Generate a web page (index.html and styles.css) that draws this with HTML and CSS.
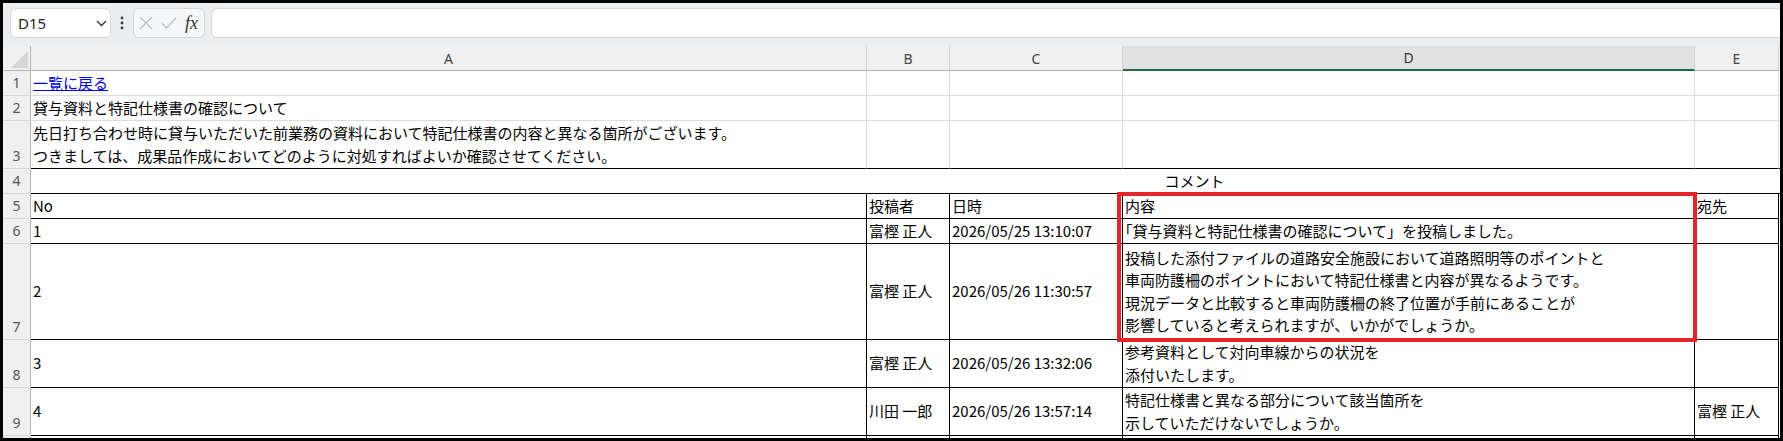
FILE: index.html
```html
<!DOCTYPE html>
<html lang="ja">
<head>
  <meta charset="UTF-8" />
  <title>コメント一覧</title>
  <link rel="stylesheet" href="styles.css">
</head>
<body>
  <div class="window">

    <div class="formula-bar">
      <div class="name-box">
        <span>D15</span>
        <svg width="11" height="7" viewBox="0 0 11 7"><path d="M1 1l4.5 4.5L10 1" fill="none" stroke="#333" stroke-width="1.3"/></svg>
      </div>
      <div class="bar-menu">
        <svg width="4" height="14" viewBox="0 0 4 14" fill="#3a3a3a"><circle cx="2" cy="2" r="1.4"/><circle cx="2" cy="7" r="1.4"/><circle cx="2" cy="12" r="1.4"/></svg>
      </div>
      <div class="edit-box">
        <svg width="14" height="14" viewBox="0 0 14 14"><path d="M1 1L13 13M13 1L1 13" stroke="#b9b9b9" stroke-width="1.2"/></svg>
        <svg width="16" height="12" viewBox="0 0 16 12"><path d="M1 6.5L5.5 11L15 1" fill="none" stroke="#b9b9b9" stroke-width="1.2"/></svg>
        <span class="fx">fx</span>
      </div>
      <div class="formula-input"></div>
    </div>

    <div class="sheet">
      <!-- column headers -->
      <div class="corner"><svg width="17" height="17" viewBox="0 0 17 17"><path d="M17 0V17H0Z" fill="#d6d6d6"/></svg></div>
      <div class="ch">A</div>
      <div class="ch">B</div>
      <div class="ch">C</div>
      <div class="ch sel">D</div>
      <div class="ch">E</div>
      <div class="ch"></div>

      <!-- 1 -->
      <div class="rh">1</div>
      <div class="c"><a class="link" href="#">一覧に戻る</a></div>
      <div class="c"></div>
      <div class="c"></div>
      <div class="c"></div>
      <div class="c"></div>
      <div class="c"></div>

      <!-- 2 -->
      <div class="rh">2</div>
      <div class="c">貸与資料と特記仕様書の確認について</div>
      <div class="c"></div>
      <div class="c"></div>
      <div class="c"></div>
      <div class="c"></div>
      <div class="c"></div>

      <!-- 3 -->
      <div class="rh">3</div>
      <div class="c under"><div>先日打ち合わせ時に貸与いただいた前業務の資料において特記仕様書の内容と異なる箇所がございます。<br>つきましては、成果品作成においてどのように対処すればよいか確認させてください。</div></div>
      <div class="c under"></div>
      <div class="c under"></div>
      <div class="c under"></div>
      <div class="c under"></div>
      <div class="c under"></div>

      <!-- 4: merged title row -->
      <div class="rh">4</div>
      <div class="c merged">コメント</div>

      <!-- 5 -->
      <div class="rh">5</div>
      <div class="c ruled">No</div>
      <div class="c ruled">投稿者</div>
      <div class="c ruled">日時</div>
      <div class="c ruled">内容</div>
      <div class="c ruled">宛先</div>
      <div class="c"></div>

      <!-- 6 -->
      <div class="rh">6</div>
      <div class="c ruled">1</div>
      <div class="c ruled">富樫 正人</div>
      <div class="c ruled">2026/05/25 13:10:07</div>
      <div class="c ruled body">「貸与資料と特記仕様書の確認について」を投稿しました。</div>
      <div class="c ruled"></div>
      <div class="c"></div>

      <!-- 7 -->
      <div class="rh">7</div>
      <div class="c ruled">2</div>
      <div class="c ruled">富樫 正人</div>
      <div class="c ruled">2026/05/26 11:30:57</div>
      <div class="c ruled body"><div>投稿した添付ファイルの道路安全施設において道路照明等のポイントと<br>車両防護柵のポイントにおいて特記仕様書と内容が異なるようです。<br>現況データと比較すると車両防護柵の終了位置が手前にあることが<br>影響していると考えられますが、いかがでしょうか。</div></div>
      <div class="c ruled"></div>
      <div class="c"></div>

      <!-- 8 -->
      <div class="rh">8</div>
      <div class="c ruled">3</div>
      <div class="c ruled">富樫 正人</div>
      <div class="c ruled">2026/05/26 13:32:06</div>
      <div class="c ruled body"><div>参考資料として対向車線からの状況を<br>添付いたします。</div></div>
      <div class="c ruled"></div>
      <div class="c"></div>

      <!-- 9 -->
      <div class="rh">9</div>
      <div class="c ruled">4</div>
      <div class="c ruled">川田 一郎</div>
      <div class="c ruled">2026/05/26 13:57:14</div>
      <div class="c ruled body"><div>特記仕様書と異なる部分について該当箇所を<br>示していただけないでしょうか。</div></div>
      <div class="c ruled">富樫 正人</div>
      <div class="c"></div>

      <!-- 10 (only its top edge shows) -->
      <div class="rh"></div>
      <div class="c ruled"></div>
      <div class="c ruled"></div>
      <div class="c ruled"></div>
      <div class="c ruled"></div>
      <div class="c ruled"></div>
      <div class="c"></div>
    </div>

    <!-- review marker round the 内容 column -->
    <div class="highlight"></div>
  </div>
</body>
</html>
```

FILE: styles.css
```css
body {
  margin: 0;
  background: #000;
  font-family: "Noto Sans CJK JP", sans-serif;
}
.window {
  position: relative;
  margin: 3px;
  width: 1777px;
  height: 435px;
  background: #fff;
  overflow: hidden;
}

/* formula bar */
.formula-bar {
  display: flex;
  align-items: flex-start;
  height: 43px;
  box-sizing: border-box;
  padding: 5px 0 0 7px;
  background: #ebeef1;
}
.name-box {
  display: flex;
  align-items: center;
  justify-content: space-between;
  width: 101px;
  height: 30px;
  box-sizing: border-box;
  padding: 0 3px 0 7px;
  background: #fff;
  border: 1px solid #d3d6da;
  border-radius: 6px;
  font-family: "Noto Sans", sans-serif;
  font-size: 15px;
  color: #222;
}
.bar-menu {
  display: flex;
  align-items: center;
  justify-content: center;
  width: 22px;
  height: 30px;
}
.edit-box {
  display: flex;
  align-items: center;
  gap: 8px;
  width: 72px;
  height: 30px;
  box-sizing: border-box;
  padding-left: 5px;
  background: #f5f6f8;
  border: 1px solid #d3d6da;
  border-radius: 6px;
}
.fx {
  font-family: "Liberation Serif", serif;
  font-style: italic;
  font-size: 18px;
  color: #333;
}
.formula-input {
  flex: 1;
  height: 30px;
  margin-left: 6px;
  box-sizing: border-box;
  background: #fff;
  border: 1px solid #d3d6da;
  border-right: none;
  border-radius: 6px 0 0 6px;
}

/* grid */
.sheet {
  display: grid;
  grid-template-columns: 28px 836px 83px 173px 572px 84px 579px;
  grid-template-rows: 25px 25px 25px 48px 25px 25px 25px 96px 48px 48px 1fr;
  height: 392px;
}
.sheet > div {
  box-sizing: border-box;
}
.corner {
  display: flex;
  justify-content: flex-end;
  align-items: flex-end;
  padding: 0 2px 2px 0;
  background: #f0f0f0;
  border-right: 1px solid #b3b3b3;
  border-bottom: 1px solid #b3b3b3;
}
.ch {
  display: flex;
  align-items: center;
  justify-content: center;
  background: #f0f0f0;
  border-right: 1px solid #d4d4d4;
  border-bottom: 1px solid #b3b3b3;
  font-family: "Noto Sans", sans-serif;
  font-size: 14px;
  color: #444;
}
.ch.sel {
  background: #e1e1e1;
  border-bottom: 2px solid #1d6b3c;
  color: #333;
}
.rh {
  display: flex;
  align-items: flex-end;
  justify-content: center;
  padding-bottom: 2px;
  background: #f0f0f0;
  border-right: 1px solid #b3b3b3;
  border-bottom: 1px solid #d8d8d8;
  font-family: "Noto Sans", sans-serif;
  font-size: 14px;
  line-height: 20px;
  color: #555;
}
.c {
  display: flex;
  align-items: center;
  padding: 0 2px;
  border-right: 1px solid #dcdcdc;
  border-bottom: 1px solid #dcdcdc;
  font-size: 15px;
  line-height: 22.5px;
  color: #000;
  white-space: nowrap;
}
.c.under {
  border-bottom-color: #000;
}
.c.ruled {
  border-right-color: #000;
  border-bottom-color: #000;
}
.c.merged {
  grid-column: 2 / -1;
  justify-content: center;
  border-right: none;
  border-bottom-color: #000;
}
.c.body {
  text-spacing-trim: trim-start;
}
.link {
  color: #0000ee;
  text-decoration: underline;
}

.highlight {
  position: absolute;
  left: 1114px;
  top: 189px;
  width: 580px;
  height: 150px;
  box-sizing: border-box;
  border: 4px solid #e3242b;
}
```
